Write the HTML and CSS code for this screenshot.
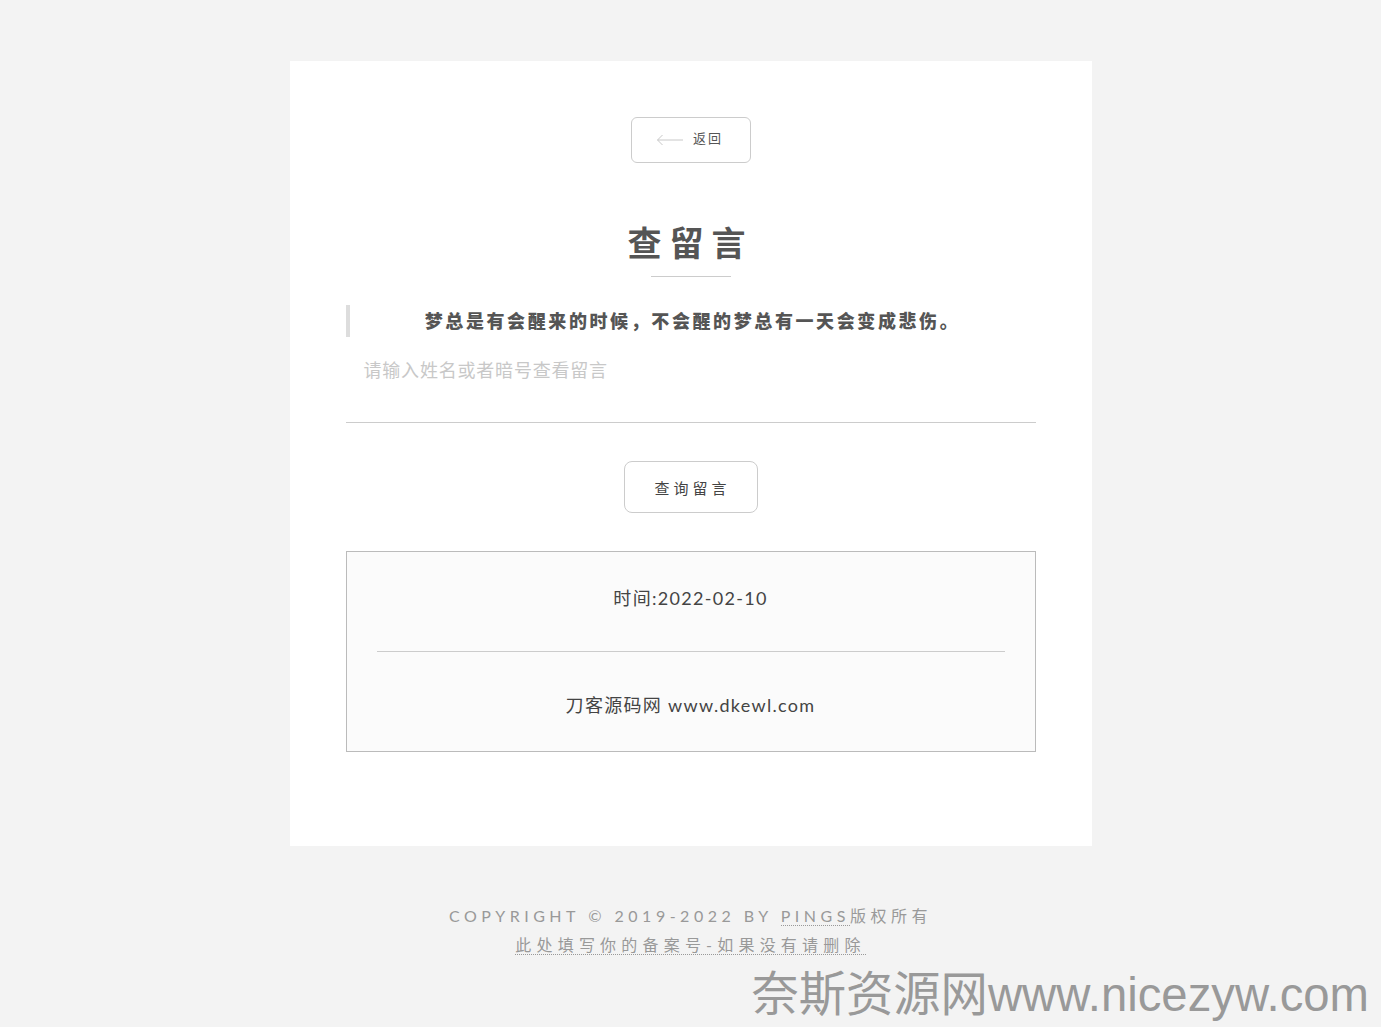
FILE: index.html
```html
<!DOCTYPE html>
<html lang="zh-CN">
<head>
    <meta charset="UTF-8">
    <meta name="viewport" content="width=device-width, initial-scale=1.0">
    <title>查留言</title>
    <link rel="stylesheet" href="styles.css">
</head>
<body>

<div class="container">
    <div class="back-row">
        <a class="back-button" href="#">
            <svg class="back-arrow" width="28" height="12" viewBox="0 0 28 12">
                <path d="M27 6H1.5M6.5 1L1.5 6l5 5" fill="none" stroke="#c8c8c8" stroke-width="1"/>
            </svg>
            <span>返回</span>
        </a>
    </div>

    <h1>查留言</h1>
    <div class="title-line"></div>

    <blockquote class="motto">梦总是有会醒来的时候，不会醒的梦总有一天会变成悲伤。</blockquote>

    <textarea class="query-input" placeholder="请输入姓名或者暗号查看留言"></textarea>

    <div class="button-row">
        <button class="query-button">查询留言</button>
    </div>

    <div class="result">
        <p class="result-time">时间:2022-02-10</p>
        <hr>
        <p class="result-text">刀客源码网 www.dkewl.com</p>
    </div>
</div>

<footer class="footer">
    <p>COPYRIGHT © 2019-2022 BY <a href="#">PINGS</a>版权所有</p>
    <p class="beian"><a href="#">此处填写你的备案号-如果没有请删除</a></p>
</footer>

<div class="watermark">奈斯资源网www.nicezyw.com</div>

</body>
</html>
```

FILE: styles.css
```css
body {
    font-family: Lato, 'Noto Sans CJK SC', sans-serif;
    background-color: #f3f3f3;
    color: #555;
    margin: 0;
    padding: 0;
    min-height: 1027px;
    position: relative;
}
.container {
    background-color: #ffffff;
    width: 690px;
    margin: 61px auto 0;
    padding: 56px 56px 94px;
}
.back-row {
    display: flex;
    justify-content: center;
}
.back-button {
    display: flex;
    align-items: center;
    justify-content: center;
    gap: 9px;
    width: 118px;
    height: 44px;
    border: 1px solid #ccc;
    border-radius: 6px;
    text-decoration: none;
    color: #555;
    font-size: 13px;
    line-height: 13px;
    letter-spacing: 2px;
}
.back-button span {
    margin-top: -3px;
}
.back-arrow {
    display: block;
    margin-left: -2px;
}
h1 {
    text-align: center;
    margin: 60px 0 0;
    font-size: 34px;
    line-height: 40px;
    font-weight: 700;
    letter-spacing: 8px;
    color: #555;
}
.title-line {
    width: 80px;
    height: 1px;
    background-color: #ccc;
    margin: 13px auto 0;
}
.motto {
    margin: 28px 0 0;
    border-left: 4px solid #ddd;
    padding: 0;
    text-align: center;
    font-size: 18px;
    line-height: 32px;
    font-weight: 900;
    letter-spacing: 2.6px;
    color: #555;
}
.query-input {
    display: block;
    box-sizing: border-box;
    width: 100%;
    height: 68px;
    margin-top: 18px;
    padding: 2px 18px;
    border: none;
    border-bottom: 1px solid #ccc;
    resize: none;
    outline: none;
    font-family: Lato, 'Noto Sans CJK SC', sans-serif;
    font-size: 18px;
    line-height: 27px;
    letter-spacing: 0.8px;
    color: #555;
    background: transparent;
}
.query-input::placeholder {
    color: #c8c8c8;
}
.button-row {
    display: flex;
    justify-content: center;
    margin-top: 38px;
}
.query-button {
    width: 134px;
    height: 52px;
    background-color: #fff;
    border: 1px solid #ccc;
    border-radius: 8px;
    font-family: Lato, 'Noto Sans CJK SC', sans-serif;
    font-size: 15px;
    letter-spacing: 4px;
    text-indent: 4px;
    color: #444;
    cursor: pointer;
}
.result {
    margin-top: 38px;
    border: 1px solid #bbb;
    background-color: #fbfbfb;
    padding: 30px;
    text-align: center;
}
.result p {
    margin: 0;
    font-size: 18px;
    line-height: 32px;
    color: #444;
    letter-spacing: 1.3px;
}
.result hr {
    border: none;
    height: 1px;
    background-color: #ccc;
    margin: 37px 0;
}
.footer {
    text-align: center;
    margin-top: 55px;
    color: #999;
    font-size: 16px;
    line-height: 29px;
    letter-spacing: 4.5px;
}
.footer p {
    margin: 0;
}
.footer .beian {
    letter-spacing: 5.2px;
}
.footer a {
    color: #999;
    text-decoration: none;
    border-bottom: 1px dotted #999;
}
.watermark {
    position: absolute;
    right: 12px;
    bottom: 4px;
    font-family: 'Liberation Sans', 'Noto Sans CJK SC', sans-serif;
    font-size: 47.3px;
    line-height: 56px;
    color: #999;
}
```
